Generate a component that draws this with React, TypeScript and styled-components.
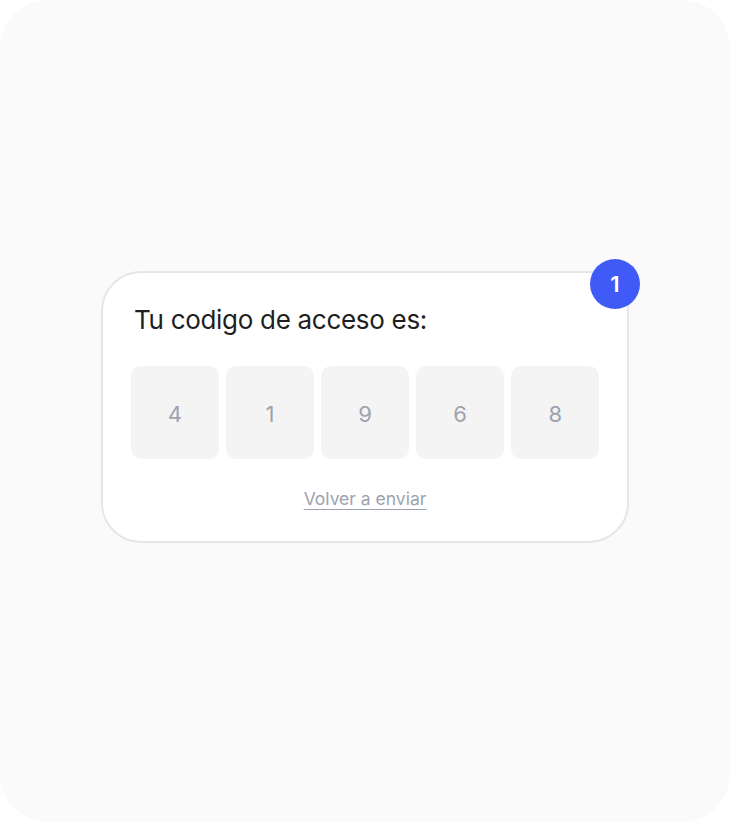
import React from 'react';
import styled, { createGlobalStyle } from 'styled-components';

const GlobalStyle = createGlobalStyle`
  html, body {
    margin: 0;
    padding: 0;
    background: #ffffff;
  }
  body {
    font-family: Inter, "Noto Sans", sans-serif;
    -webkit-font-smoothing: antialiased;
  }
`;

const Page = styled.div`
  width: 730px;
  height: 822px;
  background: #fafafa;
  border-radius: 48px;
  display: flex;
  align-items: center;
  justify-content: center;
  box-sizing: border-box;
  padding-bottom: 8px;
`;

const Card = styled.div`
  position: relative;
  width: 528px;
  box-sizing: border-box;
  background: #ffffff;
  border: 2px solid #e6e6e6;
  border-radius: 40px;
  padding: 29px 28px 31px;
  display: flex;
  flex-direction: column;
`;

const Badge = styled.div`
  position: absolute;
  top: -14px;
  right: -13px;
  width: 50px;
  height: 50px;
  border-radius: 50%;
  background: #3f5af6;
  color: #ffffff;
  font-size: 22px;
  font-weight: 600;
  display: flex;
  align-items: center;
  justify-content: center;
`;

const Title = styled.h1`
  margin: 0 0 0 3px;
  font-size: 26px;
  line-height: 36px;
  font-weight: 400;
  color: #1f1f1f;
  letter-spacing: -0.3px;
`;

const CodeRow = styled.div`
  display: grid;
  grid-template-columns: repeat(5, 1fr);
  gap: 7.5px;
  margin-top: 28px;
`;

const Digit = styled.div`
  height: 93px;
  padding-top: 2px;
  box-sizing: border-box;
  border-radius: 10px;
  background: #f4f4f5;
  color: #9ca3af;
  font-size: 22px;
  display: flex;
  align-items: center;
  justify-content: center;
`;

const Resend = styled.a`
  align-self: center;
  margin-top: 29px;
  font-size: 17.5px;
  line-height: 22px;
  color: #9ca3af;
  text-decoration: underline;
  text-underline-offset: 4px;
  text-decoration-thickness: 1px;
  cursor: pointer;
`;

const code = ['4', '1', '9', '6', '8'];

const App: React.FC = () => {
  return (
    <>
      <GlobalStyle />
      <Page>
        <Card>
          <Badge>1</Badge>
          <Title>Tu codigo de acceso es:</Title>
          <CodeRow>
            {code.map((d, i) => (
              <Digit key={i}>{d}</Digit>
            ))}
          </CodeRow>
          <Resend>Volver a enviar</Resend>
        </Card>
      </Page>
    </>
  );
};

export default App;
